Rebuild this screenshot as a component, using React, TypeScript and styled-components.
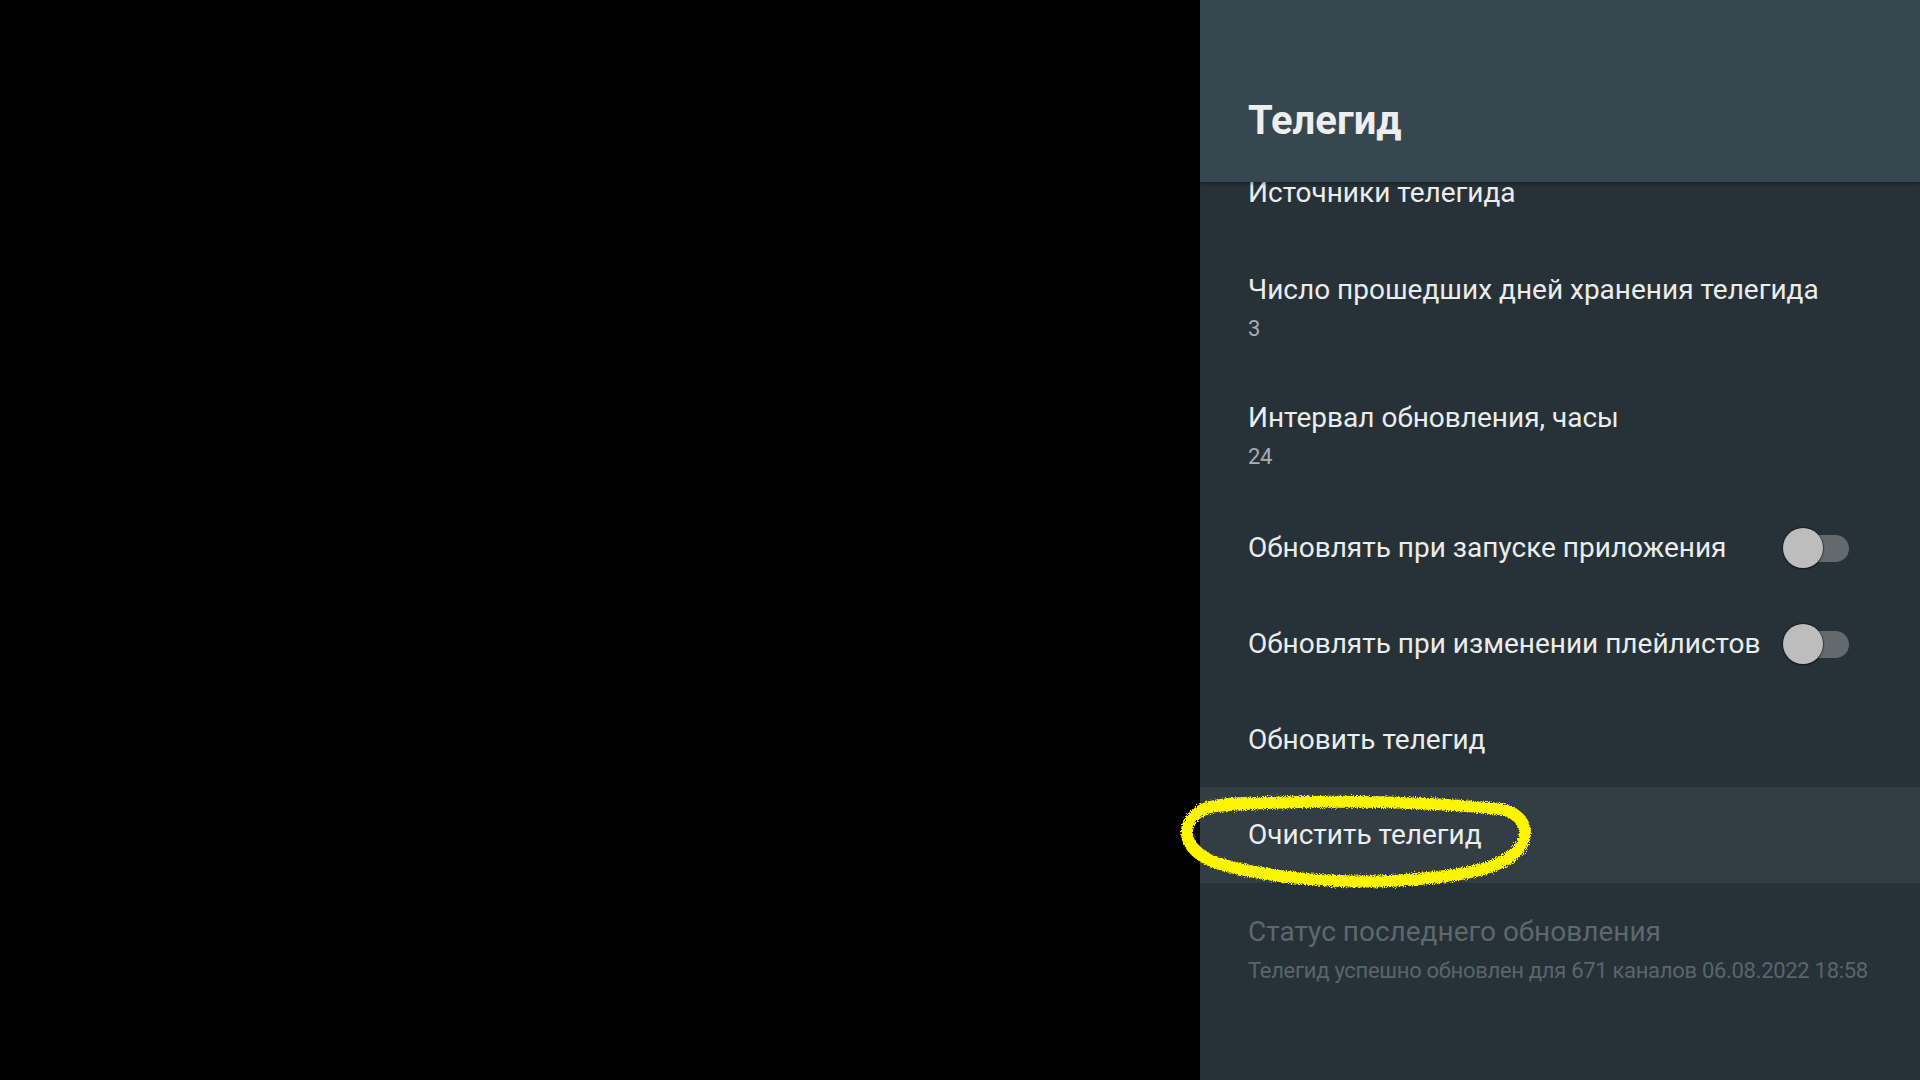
import React from "react";
import styled, { createGlobalStyle } from "styled-components";

const Global = createGlobalStyle`
  html, body { margin: 0; padding: 0; background: #000; }
  body { font-family: Roboto, "Noto Sans", "Liberation Sans", sans-serif; }
  * { box-sizing: border-box; }
`;

const Screen = styled.div`
  width: 1920px;
  height: 1080px;
  display: flex;
  background: #000;
  overflow: hidden;
`;

const Backdrop = styled.div`
  flex: 1;
  background: #000;
`;

const Panel = styled.aside`
  position: relative;
  width: 720px;
  height: 1080px;
  display: flex;
  flex-direction: column;
  background: #263238;
  overflow: hidden;
`;

const Header = styled.header`
  position: relative;
  z-index: 1;
  height: 182px;
  flex: none;
  padding: 97px 48px 0;
  background: #37474f;
  box-shadow: 0 2px 3px rgba(0, 0, 0, 0.35);
`;

const Title = styled.h1`
  margin: 0;
  font-family: Roboto, "Noto Sans", sans-serif;
  font-weight: 700;
  font-size: 40px;
  line-height: 48px;
  color: #eeeeee;
`;

const List = styled.div`
  display: flex;
  flex-direction: column;
`;

const Row = styled.div<{ $h: number; $active?: boolean; $clip?: boolean }>`
  height: ${(p) => p.$h}px;
  flex: none;
  display: flex;
  align-items: ${(p) => (p.$clip ? "flex-end" : "center")};
  justify-content: space-between;
  gap: 24px;
  padding: ${(p) => (p.$clip ? "0 71px 33px 48px" : "0 71px 0 48px")};
  background: ${(p) => (p.$active ? "#333d44" : "transparent")};
`;

const Texts = styled.div`
  display: flex;
  flex-direction: column;
  min-width: 0;
`;

const ItemTitle = styled.div<{ $disabled?: boolean }>`
  font-size: 28px;
  line-height: 36px;
  font-weight: 400;
  color: ${(p) => (p.$disabled ? "#5d676d" : "#ececec")};
  white-space: nowrap;
`;

const ItemSub = styled.div<{ $disabled?: boolean }>`
  margin-top: 6px;
  font-size: 22px;
  letter-spacing: -0.3px;
  line-height: 30px;
  color: ${(p) => (p.$disabled ? "#5a656a" : "#a9adb0")};
  white-space: nowrap;
`;

const Switch = styled.div`
  position: relative;
  flex: none;
  width: 66px;
  height: 40px;
`;

const Track = styled.div`
  position: absolute;
  left: 2px;
  top: 7px;
  width: 64px;
  height: 27px;
  border-radius: 14px;
  background: #626a6e;
`;

const Thumb = styled.div`
  position: absolute;
  left: 0;
  top: 0;
  width: 40px;
  height: 40px;
  border-radius: 50%;
  background: #bdbdbd;
  box-shadow: 0 0 1px 1px rgba(0, 0, 0, 0.35), 0 1px 2px rgba(0, 0, 0, 0.4);
`;

const Scribble = styled.svg`
  position: absolute;
  top: 780px;
  width: 390px;
  height: 120px;
  overflow: visible;
  pointer-events: none;
`;

type Item = {
  title: string;
  sub?: string;
  toggle?: boolean;
  h: number;
  active?: boolean;
  disabled?: boolean;
  clip?: boolean;
};

const items: Item[] = [
  { title: "Источники телегида", h: 62, clip: true },
  { title: "Число прошедших дней хранения телегида", sub: "3", h: 128 },
  { title: "Интервал обновления, часы", sub: "24", h: 128 },
  { title: "Обновлять при запуске приложения", toggle: true, h: 96 },
  { title: "Обновлять при изменении плейлистов", toggle: true, h: 96 },
  { title: "Обновить телегид", h: 95 },
  { title: "Очистить телегид", h: 96, active: true },
  {
    title: "Статус последнего обновления",
    sub: "Телегид успешно обновлен для 671 каналов 06.08.2022 18:58",
    h: 133,
    disabled: true,
  },
];

export default function App() {
  return (
    <>
      <Global />
      <Screen>
        <Backdrop />
        <Panel>
          <Header>
            <Title>Телегид</Title>
          </Header>
          <List>
            {items.map((it) => (
              <Row key={it.title} $h={it.h} $active={it.active} $clip={it.clip}>
                <Texts>
                  <ItemTitle $disabled={it.disabled}>{it.title}</ItemTitle>
                  {it.sub && <ItemSub $disabled={it.disabled}>{it.sub}</ItemSub>}
                </Texts>
                {it.toggle && (
                  <Switch>
                    <Track />
                    <Thumb />
                  </Switch>
                )}
              </Row>
            ))}
          </List>
        </Panel>
        <Scribble viewBox="1160 780 390 120" style={{ left: 1160 }}>
          <defs>
            <filter id="rough" x="-5%" y="-20%" width="110%" height="140%">
              <feTurbulence type="fractalNoise" baseFrequency="0.9" numOctaves="2" seed="3" />
              <feDisplacementMap in="SourceGraphic" scale="6" />
            </filter>
          </defs>
          <path
            d="M 1215 806 C 1300 799, 1420 801, 1500 809 C 1528 814, 1531 838, 1516 852 C 1496 873, 1440 878, 1390 881 C 1320 884, 1250 874, 1214 862 C 1190 852, 1180 835, 1192 818 C 1200 808, 1215 804, 1245 803"
            fill="none"
            stroke="#fbf500"
            strokeWidth="12"
            strokeLinecap="round"
            filter="url(#rough)"
          />
        </Scribble>
      </Screen>
    </>
  );
}
